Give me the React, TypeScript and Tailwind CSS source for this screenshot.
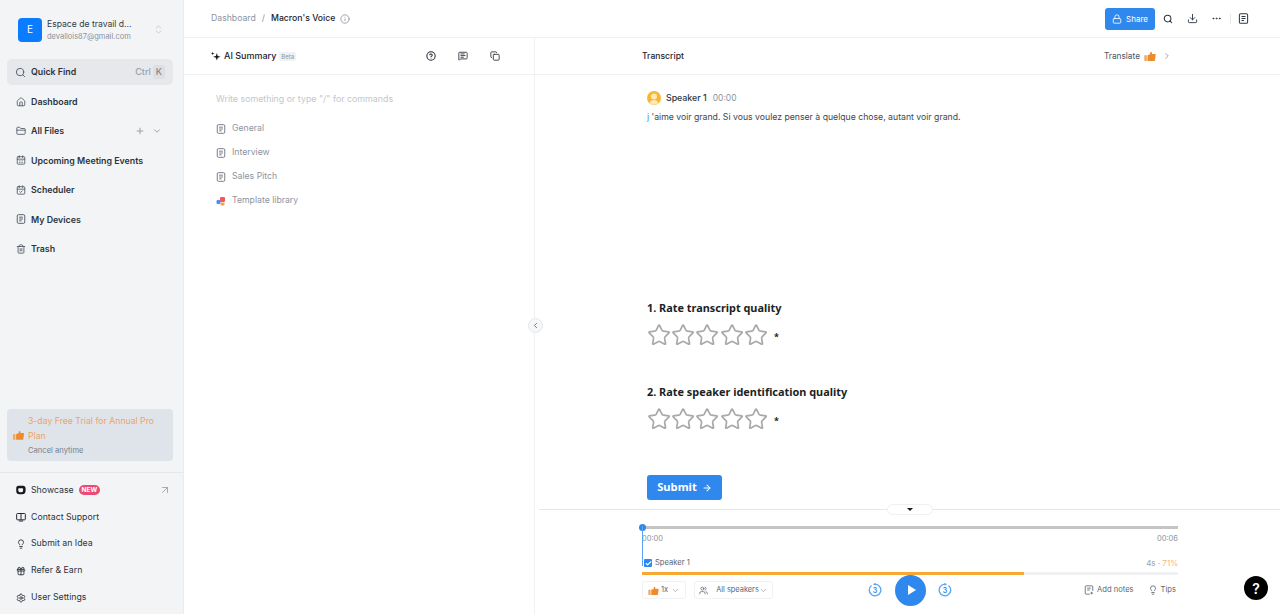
import {
  ArrowRight,
  ArrowUpRight,
  CalendarCheck,
  CalendarDays,
  Check,
  ChevronDown,
  ChevronLeft,
  ChevronRight,
  ChevronsUpDown,
  CircleHelp,
  Copy,
  Download,
  Ellipsis,
  FolderClosed,
  Gift,
  House,
  Info,
  Lightbulb,
  Lock,
  MessageSquareText,
  Plus,
  Search,
  Settings,
  Star,
  Trash2,
  Users,
} from 'lucide-react'

function DocIcon({ className }: { className?: string }) {
  return (
    <svg viewBox="0 0 12 12" fill="none" stroke="currentColor" strokeWidth="1.100" className={className}>
      <rect x="1.500" y="0.800" width="9" height="10.400" rx="1.500" />
      <path d="M3.800 3.800h4.400M3.800 6h4.400M3.800 8.200h2.800" />
    </svg>
  )
}

function NotesIcon({ className }: { className?: string }) {
  return (
    <svg viewBox="0 0 12 12" fill="none" stroke="currentColor" strokeWidth="1" className={className}>
      <path d="M7 11H2.500a1 1 0 0 1-1-1V2a1 1 0 0 1 1-1h7a1 1 0 0 1 1 1v5" />
      <path d="M3.800 3.800h4.400M3.800 6h3M9.200 8.200v3M7.700 9.700h3" />
    </svg>
  )
}

function SupportIcon({ className }: { className?: string }) {
  return (
    <svg viewBox="0 0 12 12" fill="none" stroke="currentColor" strokeWidth="1.200" className={className}>
      <rect x="0.800" y="1.800" width="10.400" height="7.600" rx="1" />
      <path d="M6 1.800v7.600M3.500 10.800h5" />
    </svg>
  )
}

function ShowcaseIcon({ className }: { className?: string }) {
  return (
    <svg viewBox="0 0 12 12" className={className}>
      <path
        fillRule="evenodd"
        d="M3 .800h5.500c1.800 0 3 1.300 3 3v3.400c0 2.300-1.700 4-4 4H4c-2.200 0-3.700-1.500-3.700-3.700V3.500C.300 1.900 1.400.800 3 .800zm.500 3c-.6 0-.8.300-.8.800v1.800c0 1.300.8 2.200 2 2.200h1.800c1.300 0 2-.800 2-2V4.600c0-.5-.3-.8-.8-.8z"
        fill="#15181c"
      />
    </svg>
  )
}

function AiSparkle({ className }: { className?: string }) {
  return (
    <svg viewBox="0 0 12 12" fill="#15181c" className={className}>
      <path d="M7 2.500 8.100 5.900 11.500 7 8.100 8.100 7 11.500 5.900 8.100 2.500 7 5.900 5.900z" />
      <path d="M2 .800 2.500 2.500 4.200 3 2.500 3.500 2 5.200 1.500 3.500-.200 3 1.500 2.500z" />
    </svg>
  )
}

function SpeakerAvatar() {
  return (
    <svg viewBox="0 0 14 14" className="h-[14px] w-[14px]">
      <circle cx="7" cy="7" r="7" fill="#f7b733" />
      <circle cx="7" cy="5.600" r="3" fill="#ffe9b8" />
      <path d="M2.600 12c.7-2 2.400-3 4.400-3s3.700 1 4.400 3a7 7 0 0 1-8.800 0z" fill="#ffe9b8" />
    </svg>
  )
}

const navItems = [
  { label: 'Dashboard', icon: House },
  { label: 'All Files', icon: FolderClosed, extra: true },
  { label: 'Upcoming Meeting Events', icon: CalendarDays },
  { label: 'Scheduler', icon: CalendarCheck },
  { label: 'My Devices', icon: DocIcon },
  { label: 'Trash', icon: Trash2 },
]

function Thumb({ className }: { className?: string }) {
  return (
    <svg viewBox="0 0 16 14" className={className}>
      <path d="M0 6h3.500v8H1a1 1 0 0 1-1-1z" fill="#f2a65a" />
      <path
        d="M4.500 6 8 4.500 8.800 1c1.600 0 2.300 1 2 3.200H15c.7 0 1 .5 1 1.200L15 13c-.1.6-.5 1-1.100 1H4.500z"
        fill="#ee8b2c"
      />
    </svg>
  )
}

function ReplayIcon({ flip }: { flip?: boolean }) {
  return (
    <div className="relative flex h-[14px] w-[14px] items-center justify-center">
      <svg viewBox="0 0 14 14" className={`absolute inset-0 h-[14px] w-[14px] ${flip ? '-scale-x-100' : ''}`}>
        <path d="M3.500 2.400a5.800 5.800 0 1 0 3.500-1.200" fill="none" stroke="#5aa2f2" strokeWidth="1.300" />
        <path d="M7.500-.200v3L4.900 1.200z" fill="#5aa2f2" />
      </svg>
      <span className="mt-[1px] text-[7px] leading-none font-semibold text-[#2f88ee]">3</span>
    </div>
  )
}

function Stars() {
  return (
    <div className="mt-[7px] flex items-center">
      {[1, 2, 3, 4, 5].map((i) => (
        <Star key={i} className="h-[24.200px] w-[24.200px] text-[#a9a9a9]" strokeWidth={1.700} />
      ))}
      <span className="ml-[6px] mt-[2px] h-[7px] text-[9px] leading-[7px] font-bold text-[#222]">*</span>
    </div>
  )
}

export default function App() {
  return (
    <div className="flex h-[614px] w-[1280px] overflow-hidden bg-white font-['Inter',sans-serif] text-[9px] text-[#2b3440]">
      {/* Sidebar */}
      <aside className="flex w-[184px] shrink-0 flex-col border-r border-[#e9ebee] bg-[#f3f4f6] pl-[7px] pr-[10px]">
        <div className="flex h-[59px] items-center pl-[11px] pr-[9px]">
          <div className="flex h-6 w-6 items-center justify-center rounded-[4px] bg-[#0a7cff] text-[10px] text-white">E</div>
          <div className="ml-[5px] min-w-0 flex-1">
            <div className="text-[8.600px] leading-[14px] text-[#333c48]">Espace de travail d...</div>
            <div className="text-[7.500px] leading-[12px] text-[#8a929c]">devallois87@gmail.com</div>
          </div>
          <ChevronsUpDown className="h-[11px] w-[11px] text-[#c5c9ce]" />
        </div>

        <div className="flex h-[26px] items-center rounded-[5px] bg-[#e7e8eb] pl-[8px] pr-[8px]">
          <Search className="h-[11px] w-[11px] text-[#4b5563]" />
          <span className="ml-[5px] flex-1 text-[8.800px] font-semibold">Quick Find</span>
          <span className="text-[9px] font-medium text-[#9aa1aa]">Ctrl</span>
          <span className="ml-[2px] rounded-[2px] bg-[#dedfe3] px-[3px] text-[9px] font-medium text-[#7f8791]">K</span>
        </div>

        <nav className="mt-[2px] text-[8.850px]">
          {navItems.map((item) => (
            <div key={item.label} className="flex h-[29.400px] items-center pl-[9px] pr-[11px]">
              <item.icon className="h-[10px] w-[10px] text-[#4b5563]" />
              <span className="ml-[5px] flex-1 font-semibold">{item.label}</span>
              {item.extra && (
                <>
                  <Plus className="h-[10px] w-[10px] text-[#8d949d]" />
                  <ChevronDown className="ml-[7px] h-[10px] w-[10px] text-[#8d949d]" />
                </>
              )}
            </div>
          ))}
        </nav>

        <div className="mt-auto flex h-[52px] items-center rounded-[4px] bg-[#dfe4ea] pl-[6px] pr-[8px]">
          <Thumb className="h-[10px] w-[11px] shrink-0" />
          <div className="ml-[4px]">
            <div className="text-[8.700px] leading-[15px] text-[#f0a267]">3-day Free Trial for Annual Pro Plan</div>
            <div className="text-[7.600px] leading-[13px] text-[#78808a]">Cancel anytime</div>
          </div>
        </div>

        <div className="-ml-[7px] -mr-[10px] mt-[11px] border-t border-[#e5e7ea] pl-[7px] pr-[10px] pt-[4px] pb-[3px] text-[8.750px]">
          <div className="flex h-[26.800px] items-center pl-[9px] pr-[2px]">
            <ShowcaseIcon className="h-[10px] w-[10px]" />
            <span className="ml-[5px]">Showcase</span>
            <span className="ml-[5px] rounded-full bg-[#ea4c78] px-[3px] text-[6.500px] leading-[10px] font-bold text-white">NEW</span>
            <ArrowUpRight className="ml-auto h-[12px] w-[12px] text-[#8d949d]" strokeWidth={1.500} />
          </div>
          {[
            { label: 'Contact Support', icon: SupportIcon },
            { label: 'Submit an Idea', icon: Lightbulb },
            { label: 'Refer & Earn', icon: Gift },
            { label: 'User Settings', icon: Settings },
          ].map((item) => (
            <div key={item.label} className="flex h-[26.800px] items-center pl-[9px]">
              <item.icon className="h-[10px] w-[10px] text-[#232a33]" />
              <span className="ml-[5px]">{item.label}</span>
            </div>
          ))}
        </div>
      </aside>

      {/* Main */}
      <main className="flex min-w-0 flex-1 flex-col">
        <header className="flex h-[38px] shrink-0 items-center border-b border-[#eef0f2] pl-[27px] pr-[31px] text-[8.700px]">
          <span className="text-[#8d949d]">Dashboard</span>
          <span className="mx-[6px] text-[#8d949d]">/</span>
          <span className="font-medium text-[#1c232c]">Macron's Voice</span>
          <Info className="ml-[5px] h-[10px] w-[10px] text-[#8d949d]" />
          <div className="ml-auto flex items-center">
            <div className="flex h-[22px] w-[50px] items-center justify-center gap-[4px] rounded-[3px] bg-[#2f88ee] text-[8px] text-white">
              <Lock className="h-[10px] w-[10px]" />
              Share
            </div>
            <Search className="ml-[8px] h-[10px] w-[10px] text-[#2b3440]" strokeWidth={2.500} />
            <Download className="ml-[14px] h-[11px] w-[11px] text-[#2b3440]" strokeWidth={2} />
            <Ellipsis className="ml-[13px] h-[11px] w-[11px] text-[#2b3440]" />
            <span className="ml-[8px] h-[10px] w-px bg-[#e5e7ea]" />
            <DocIcon className="ml-[7px] h-[11px] w-[11px] text-[#2b3440]" />
          </div>
        </header>

        <div className="relative flex min-h-0 flex-1">
          {/* AI summary */}
          <section className="w-[351px] shrink-0 border-r border-[#eef0f2]">
            <div className="flex h-[37px] items-center border-b border-[#eef0f2] pl-[27px] pr-[34px]">
              <AiSparkle className="h-[10px] w-[10px]" />
              <span className="ml-[3px] font-medium text-[#1c232c]">AI Summary</span>
              <span className="ml-[3px] rounded-[2px] bg-[#f0f1f3] px-[2px] text-[6px] leading-[9px] text-[#8d949d]">Beta</span>
              <CircleHelp className="ml-auto h-[10px] w-[10px] text-[#232a33]" strokeWidth={2.500} />
              <MessageSquareText className="ml-[22px] h-[10px] w-[10px] text-[#232a33]" strokeWidth={2} />
              <Copy className="ml-[22px] h-[10px] w-[10px] text-[#232a33]" strokeWidth={2} />
            </div>
            <div className="pl-[32px] pt-[17px] text-[8.700px] text-[#8d949d]">
              <div className="h-[14px] text-[8.850px] leading-[14px] text-[#c3c7cc]">Write something or type "/" for commands</div>
              <div className="mt-[11px] flex flex-col">
                {['General', 'Interview', 'Sales Pitch'].map((t) => (
                  <div key={t} className="flex h-[24px] items-center">
                    <DocIcon className="h-[10px] w-[10px] text-[#6b7280]" />
                    <span className="ml-[6px]">{t}</span>
                  </div>
                ))}
                <div className="flex h-[24px] items-center">
                  <svg viewBox="0 0 10 10" className="h-[10px] w-[10px]">
                    <circle cx="2.500" cy="6" r="2.200" fill="#4b8df0" />
                    <rect x="4" y="1" width="5" height="5" rx="1" fill="#ef5b5b" />
                    <rect x="4.500" y="6.500" width="4" height="3" rx="1" fill="#f6a04d" />
                  </svg>
                  <span className="ml-[6px]">Template library</span>
                </div>
              </div>
            </div>
          </section>

          {/* Collapse toggle */}
          <div className="absolute left-[344px] top-[280px] flex h-[15px] w-[15px] items-center justify-center rounded-full border border-[#e5e7ea] bg-[#f6f7f8]">
            <ChevronLeft className="h-[9px] w-[9px] text-[#4b5563]" />
          </div>

          {/* Transcript */}
          <section className="flex min-w-0 flex-1 flex-col">
            <div className="flex h-[37px] shrink-0 items-center border-b border-[#eef0f2] pl-[107px] pr-[108px]">
              <span className="text-[8.600px] font-medium text-[#1c232c]">Transcript</span>
              <span className="ml-auto text-[8.300px] text-[#4b5563]">Translate</span>
              <Thumb className="ml-[4px] h-[10px] w-[12px]" />
              <ChevronRight className="ml-[6px] h-[10px] w-[10px] text-[#8d949d]" />
            </div>

            <div className="min-h-0 flex-1 pl-[112px]">
              <div className="mt-[16px] flex h-[14px] items-center">
                <SpeakerAvatar />
                <span className="ml-[5px] text-[8.800px] font-medium text-[#2b3440]">Speaker 1</span>
                <span className="ml-[6px] text-[8.500px] text-[#8d949d]">00:00</span>
              </div>
              <p className="mt-[5px] text-[8.700px] leading-[14px] text-[#3c4650]">
                <span className="text-[#2f88ee]">j</span> 'aime voir grand. Si vous voulez penser à quelque chose, autant voir grand.
              </p>

              <div className="mt-[176px] font-['Noto_Sans',sans-serif]">
                <h3 className="text-[10.900px] leading-[16px] font-bold text-[#1b1f24]">1. Rate transcript quality</h3>
                <Stars />
                <h3 className="mt-[37px] text-[10.900px] leading-[16px] font-bold text-[#1b1f24]">2. Rate speaker identification quality</h3>
                <Stars />
                <button className="mt-[44px] flex h-[25px] w-[75px] items-center justify-center gap-[5px] rounded-[3px] bg-[#2f88ee] text-[11.200px] font-bold text-white">
                  Submit
                  <ArrowRight className="h-[10px] w-[10px]" strokeWidth={2.500} />
                </button>
              </div>
            </div>

            {/* Player */}
            <div className="relative ml-[4px] h-[105px] shrink-0 border-t border-[#e5e7ea] pl-[103px] pr-[102px]">
              <div className="absolute left-[348px] top-[-6px] flex h-[11px] w-[46px] items-center justify-center rounded-full border border-[#eef0f2] bg-white">
                <span className="h-0 w-0 border-x-[3px] border-t-[3px] border-x-transparent border-t-[#15181c]" />
              </div>
              <div className="relative mt-[16px] h-[3px] bg-[#c4c4c4]">
                <span className="absolute -left-[3px] -top-[2px] h-[7px] w-[7px] rounded-full bg-[#2f88ee]" />
                <span className="absolute left-0 top-0 h-[40px] w-px bg-[#5aa2f2]" />
              </div>
              <div className="mt-[4px] flex justify-between text-[7.500px] leading-[12px] text-[#8d949d]">
                <span>00:00</span>
                <span>00:06</span>
              </div>
              <div className="mt-[12px] flex h-[12px] items-center pl-[2px] text-[7.600px]">
                <span className="flex h-[8px] w-[8px] items-center justify-center rounded-[1px] bg-[#2f88ee]">
                  <Check className="h-[7px] w-[7px] text-white" strokeWidth={4} />
                </span>
                <span className="ml-[3px] text-[#5b6570]">Speaker 1</span>
                <span className="ml-auto text-[8px] text-[#9aa1aa]">4s · <span className="text-[#f4b774]">71%</span></span>
              </div>
              <div className="mt-[3px] h-[3px] bg-[#f0f1f3]">
                <div className="h-[3px] w-[382px] bg-[#f7a833]" />
              </div>
              <div className="mt-[6px] flex h-[18px] items-center text-[7.600px] text-[#5b6570]">
                <div className="flex h-[18px] w-[44px] items-center justify-center rounded-[3px] border border-[#f0f1f3]">
                  <Thumb className="h-[9px] w-[11px]" />
                  <span className="ml-[2px]">1x</span>
                  <ChevronDown className="ml-[3px] h-[9px] w-[9px] text-[#9aa1aa]" />
                </div>
                <div className="ml-[8px] flex h-[18px] w-[79px] items-center justify-center rounded-[3px] border border-[#f0f1f3]">
                  <Users className="h-[9px] w-[9px]" />
                  <span className="ml-[8px] text-[7.400px]">All speakers</span>
                  <ChevronDown className="h-[9px] w-[9px] text-[#9aa1aa]" />
                </div>
                <div className="ml-[95px] flex items-center">
                  <ReplayIcon />
                  <div className="ml-[13px] mr-[12px] flex h-[31px] w-[31px] items-center justify-center rounded-full bg-[#2f88ee]">
                    <span className="ml-[2px] h-0 w-0 border-y-[5px] border-l-[8px] border-y-transparent border-l-white" />
                  </div>
                  <ReplayIcon flip />
                </div>
                <NotesIcon className="ml-auto h-[10px] w-[10px]" />
                <span className="ml-[3px]">Add notes</span>
                <Lightbulb className="ml-[14px] h-[10px] w-[10px]" />
                <span className="ml-[3px] mr-[2px]">Tips</span>
              </div>
              <div className="absolute right-[12px] top-[66px] flex h-[24px] w-[24px] items-center justify-center rounded-full bg-black text-[14px] font-semibold text-white">?</div>
            </div>
          </section>
        </div>
      </main>
    </div>
  )
}
